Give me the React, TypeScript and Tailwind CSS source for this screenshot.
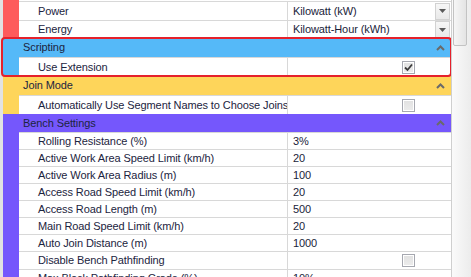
type Prop = {
  type: "prop";
  label: string;
  value?: string;
  check?: boolean;
  dropdown?: boolean;
  h: string;
};
type Cat = { type: "cat"; label: string; h: string };
type Group = { band: string; items: (Prop | Cat)[] };

const GROUPS: Group[] = [
  {
    band: "bg-[#fe5b5b]",
    items: [
      { type: "prop", label: "Power", value: "Kilowatt (kW)", dropdown: true, h: "h-[19px]" },
      { type: "prop", label: "Energy", value: "Kilowatt-Hour (kWh)", dropdown: true, h: "h-[18px]" },
    ],
  },
  {
    band: "bg-[#55b9f8]",
    items: [
      { type: "cat", label: "Scripting", h: "h-[19px]" },
      { type: "prop", label: "Use Extension", check: true, h: "h-[19px]" },
    ],
  },
  {
    band: "bg-[#fed55a]",
    items: [
      { type: "cat", label: "Join Mode", h: "h-[19px]" },
      {
        type: "prop",
        label: "Automatically Use Segment Names to Choose Joins",
        check: false,
        h: "h-[19px]",
      },
    ],
  },
  {
    band: "bg-[#7557fc]",
    items: [
      { type: "cat", label: "Bench Settings", h: "h-[18px]" },
      { type: "prop", label: "Rolling Resistance (%)", value: "3%", h: "h-[17px]" },
      { type: "prop", label: "Active Work Area Speed Limit (km/h)", value: "20", h: "h-[17px]" },
      { type: "prop", label: "Active Work Area Radius (m)", value: "100", h: "h-[17px]" },
      { type: "prop", label: "Access Road Speed Limit (km/h)", value: "20", h: "h-[17px]" },
      { type: "prop", label: "Access Road Length (m)", value: "500", h: "h-[17px]" },
      { type: "prop", label: "Main Road Speed Limit (km/h)", value: "20", h: "h-[17px]" },
      { type: "prop", label: "Auto Join Distance (m)", value: "1000", h: "h-[17px]" },
      { type: "prop", label: "Disable Bench Pathfinding", check: false, h: "h-[18px]" },
      { type: "prop", label: "Max Block Pathfinding Grade (%)", value: "10%", h: "h-[17px]" },
    ],
  },
];

function CheckBox({ checked }: { checked: boolean }) {
  return (
    <span className="ml-[109px] flex h-[13px] w-[13px] items-center justify-center border border-[#a6a8b0] bg-white p-px">
      <span className="flex h-full w-full items-center justify-center bg-gradient-to-b from-[#e2e2e2] to-[#ebebeb]">
        {checked && (
          <svg width="9" height="9" viewBox="0 0 9 9">
            <path d="M1 4.5 L3.5 7 L8 1.5" fill="none" stroke="#3c3c3c" strokeWidth="1.8" />
          </svg>
        )}
      </span>
    </span>
  );
}

function DropButton() {
  return (
    <span className="mr-px flex h-[17px] w-[15px] items-center justify-center border border-[#d2d2d2] bg-gradient-to-b from-[#f7f7f7] to-[#e9e9e9]">
      <svg width="7" height="4" viewBox="0 0 7 4">
        <path d="M0 0 H7 L3.5 4 Z" fill="#5a5a5a" />
      </svg>
    </span>
  );
}

function Chevron() {
  return (
    <svg width="9" height="6" viewBox="0 0 9 6">
      <path d="M1 5 L4.5 1.5 L8 5" fill="none" stroke="#6a6a6a" strokeWidth="2" />
    </svg>
  );
}

export default function App() {
  return (
    <div
      className="flex h-[277px] w-[471px] overflow-hidden bg-white text-[11px] tracking-[-0.1px] text-[#1c2440]"
      style={{ fontFamily: '"Liberation Sans", Arial, sans-serif' }}
    >
      <div className="w-[3px] shrink-0 bg-[#e2e2e2]" />
      <div className="relative w-[448px] shrink-0">
        <div className="flex h-px">
          <div className="w-[16px] bg-[#fe5b5b]" />
        </div>
        {GROUPS.map((g, gi) =>
          g.items.map((it, i) =>
            it.type === "cat" ? (
              <div
                key={`${gi}-${i}`}
                className={`flex items-center justify-between pl-[20px] pr-[6px] ${it.h} ${g.band}`}
              >
                <span>{it.label}</span>
                <Chevron />
              </div>
            ) : (
              <div key={`${gi}-${i}`} className={`flex ${it.h}`}>
                <div className={`w-[16px] shrink-0 ${g.band}`} />
                <div className="flex w-[268px] shrink-0 items-center overflow-hidden whitespace-nowrap border-t border-[#d8d8d8] pl-[19px]">
                  {it.label}
                </div>
                <div className="flex flex-1 items-center border-l border-t border-[#d8d8d8] pl-[5px]">
                  {it.check !== undefined ? (
                    <CheckBox checked={it.check} />
                  ) : (
                    <>
                      <span className="flex-1 text-[#1a1d3a]">{it.value}</span>
                      {it.dropdown && <DropButton />}
                    </>
                  )}
                </div>
              </div>
            )
          )
        )}
        <div className="absolute left-[-2px] top-[37px] h-[40px] w-[451px] rounded-[4px] border-[2px] border-[#e5212b]" />
      </div>
      <div className="relative w-[20px] shrink-0 border-l border-[#cfcfcf] bg-gradient-to-r from-[#fafafa] to-[#ececec]">
        <div className="absolute left-[1px] top-[-2px] h-[48px] w-[14px] rounded-[2px] border border-[#c3c3c3] bg-gradient-to-r from-[#f6f6f6] to-[#e4e4e4]" />
      </div>
    </div>
  );
}
